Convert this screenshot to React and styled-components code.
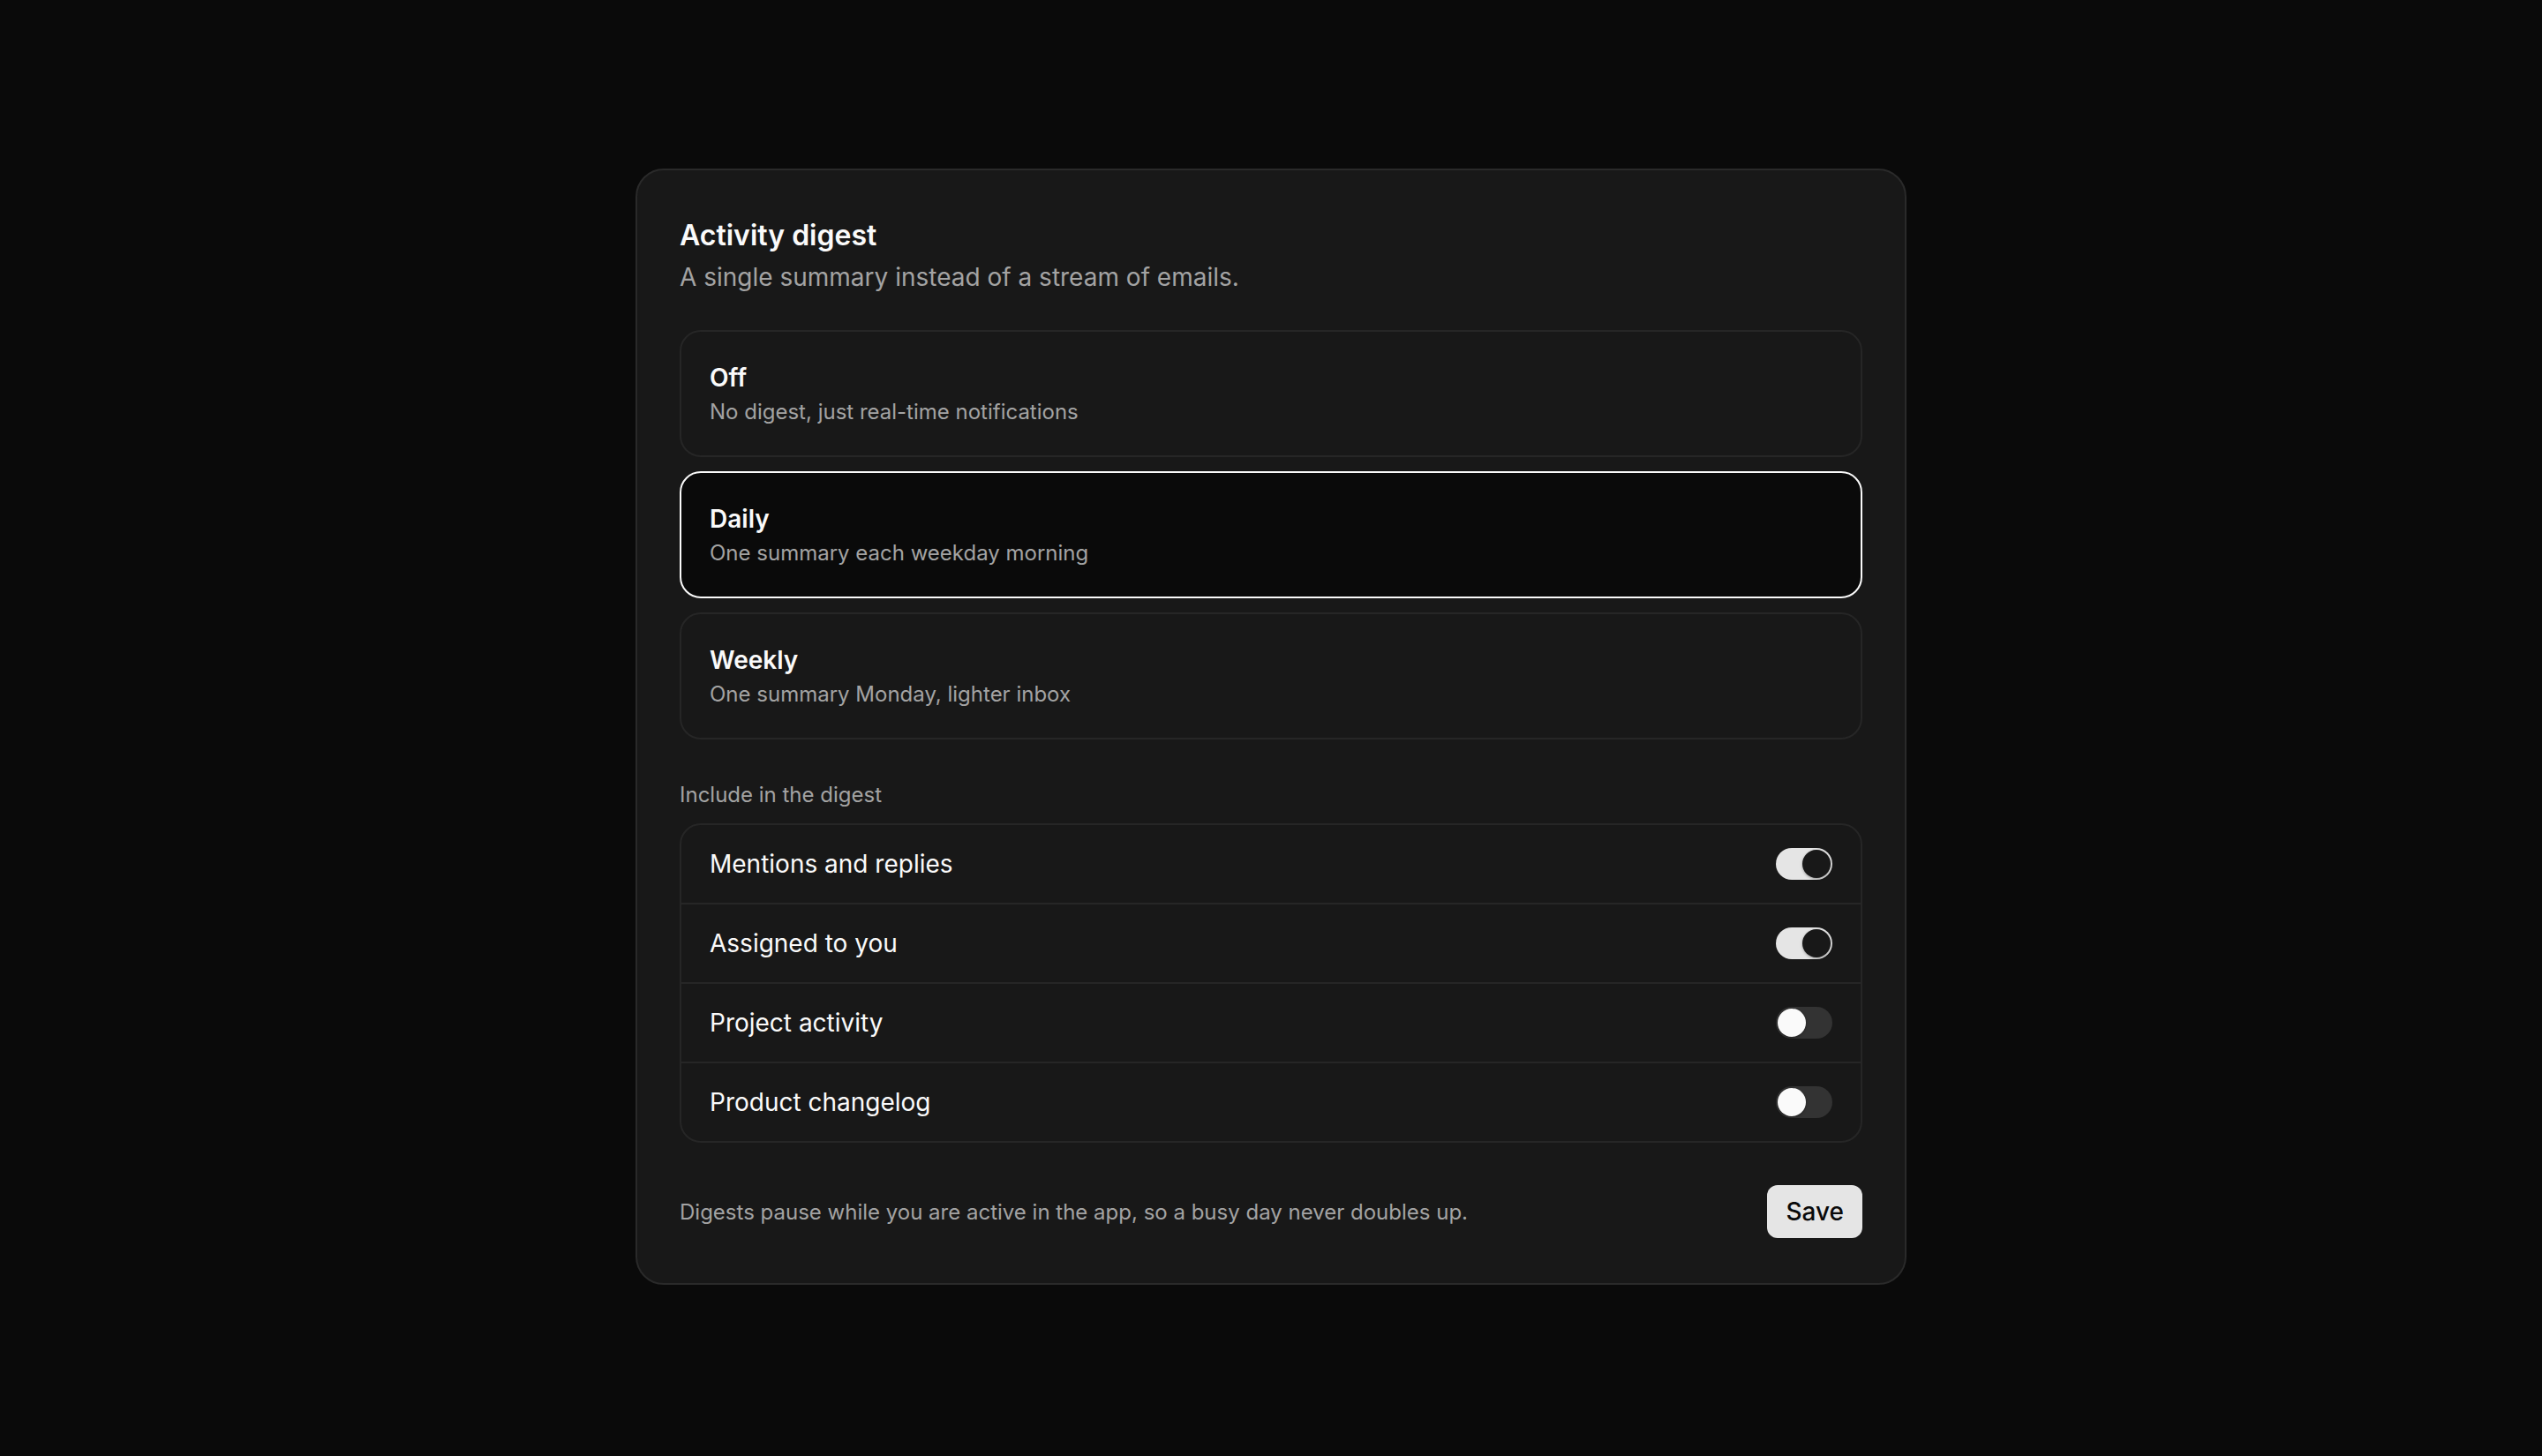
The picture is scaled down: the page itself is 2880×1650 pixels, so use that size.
import React, { useState } from "react";
import styled, { createGlobalStyle } from "styled-components";

const Global = createGlobalStyle`
  html, body { margin: 0; padding: 0; background: #0a0a0a; }
  body { font-family: Inter, "Noto Sans", "Liberation Sans", sans-serif; -webkit-font-smoothing: antialiased; }
  * { box-sizing: border-box; }
`;

const Page = styled.div`
  min-height: 1650px;
  display: flex;
  align-items: flex-start;
  justify-content: center;
  padding-top: 191px;
  background: #0a0a0a;
`;

const Card = styled.section`
  width: 1440px;
  background: #181818;
  border: 2px solid #2a2a2a;
  border-radius: 32px;
  padding: 50px 48px 51px;
  display: flex;
  flex-direction: column;
`;

const Title = styled.h1`
  margin: 0;
  font-size: 32px;
  line-height: 48px;
  font-weight: 600;
  color: #fafafa;
`;

const Subtitle = styled.p`
  margin: 3px 0 0;
  font-size: 28px;
  line-height: 40px;
  color: #a3a3a3;
`;

const Options = styled.div`
  margin-top: 40px;
  display: flex;
  flex-direction: column;
  gap: 16px;
`;

const Option = styled.button`
  all: unset;
  cursor: pointer;
  display: flex;
  flex-direction: column;
  padding: 32px;
  border-radius: 24px;
  border: 2px solid ${(p) => (p.$selected ? "#fafafa" : "#262626")};
  background: ${(p) => (p.$selected ? "#0a0a0a" : "#181818")};
`;

const OptionTitle = styled.span`
  font-size: 28px;
  line-height: 40px;
  font-weight: 600;
  color: #fafafa;
`;

const OptionDesc = styled.span`
  margin-top: 2px;
  font-size: 24px;
  line-height: 34px;
  color: #a3a3a3;
`;

const SectionLabel = styled.div`
  margin-top: 46px;
  margin-bottom: 15px;
  font-size: 24px;
  line-height: 34px;
  color: #a3a3a3;
`;

const List = styled.div`
  border: 2px solid #262626;
  border-radius: 24px;
  overflow: hidden;
`;

const Row = styled.div`
  box-sizing: content-box;
  height: 88px;
  display: flex;
  align-items: center;
  justify-content: space-between;
  padding: 0 32px;
  & + & { border-top: 2px solid #262626; }
`;

const RowLabel = styled.span`
  font-size: 28px;
  color: #fafafa;
`;

const Track = styled.button`
  all: unset;
  cursor: pointer;
  width: 64px;
  height: 36px;
  border-radius: 18px;
  padding: 2px;
  display: flex;
  justify-content: ${(p) => (p.$on ? "flex-end" : "flex-start")};
  background: ${(p) => (p.$on ? "#e5e5e5" : "#333333")};
  box-sizing: border-box;
`;

const Knob = styled.span`
  width: 32px;
  height: 32px;
  border-radius: 50%;
  background: ${(p) => (p.$on ? "#181818" : "#fafafa")};
  box-shadow: 0 1px 3px rgba(0, 0, 0, 0.35);
`;

const Footer = styled.div`
  margin-top: 48px;
  display: flex;
  align-items: center;
  justify-content: space-between;
`;

const FooterNote = styled.span`
  font-size: 24px;
  color: #a3a3a3;
`;

const SaveButton = styled.button`
  all: unset;
  cursor: pointer;
  height: 60px;
  padding: 0 21px;
  border-radius: 12px;
  background: #e5e5e5;
  color: #0a0a0a;
  font-size: 28px;
  font-weight: 500;
  display: flex;
  align-items: center;
`;

const options = [
  { id: "off", title: "Off", desc: "No digest, just real-time notifications" },
  { id: "daily", title: "Daily", desc: "One summary each weekday morning" },
  { id: "weekly", title: "Weekly", desc: "One summary Monday, lighter inbox" },
];

const initialToggles = [
  { label: "Mentions and replies", on: true },
  { label: "Assigned to you", on: true },
  { label: "Project activity", on: false },
  { label: "Product changelog", on: false },
];

export default function App() {
  const [selected, setSelected] = useState("daily");
  const [toggles, setToggles] = useState(initialToggles);

  return (
    <Page>
      <Global />
      <Card>
        <Title>Activity digest</Title>
        <Subtitle>A single summary instead of a stream of emails.</Subtitle>
        <Options>
          {options.map((o) => (
            <Option key={o.id} $selected={selected === o.id} onClick={() => setSelected(o.id)}>
              <OptionTitle>{o.title}</OptionTitle>
              <OptionDesc>{o.desc}</OptionDesc>
            </Option>
          ))}
        </Options>
        <SectionLabel>Include in the digest</SectionLabel>
        <List>
          {toggles.map((t, i) => (
            <Row key={t.label}>
              <RowLabel>{t.label}</RowLabel>
              <Track
                $on={t.on}
                onClick={() =>
                  setToggles((prev) => prev.map((x, j) => (j === i ? { ...x, on: !x.on } : x)))
                }
              >
                <Knob $on={t.on} />
              </Track>
            </Row>
          ))}
        </List>
        <Footer>
          <FooterNote>Digests pause while you are active in the app, so a busy day never doubles up.</FooterNote>
          <SaveButton>Save</SaveButton>
        </Footer>
      </Card>
    </Page>
  );
}
